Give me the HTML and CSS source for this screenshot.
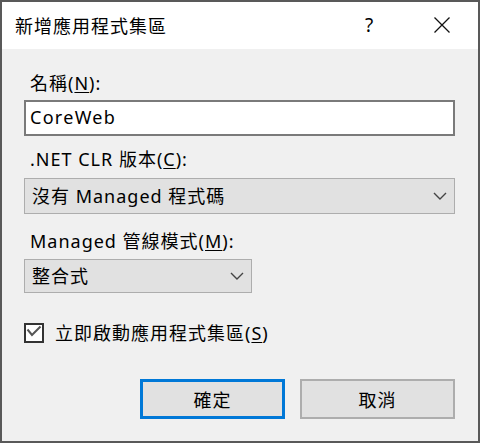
FILE: index.html
```html
<!DOCTYPE html>
<html lang="zh-Hant">
<head>
<meta charset="utf-8">
<link rel="stylesheet" href="styles.css">
</head>
<body>
<div class="window">
  <div class="titlebar">
    <div class="title">新增應用程式集區</div>
    <div class="help">?</div>
    <div class="close">
      <svg width="16" height="16" viewBox="0 0 16 16"><path d="M0.5 0.5 L15.5 15.5 M15.5 0.5 L0.5 15.5" stroke="#111" stroke-width="1.3" fill="none"/></svg>
    </div>
  </div>
  <div class="content">
    <div class="label l-name">名稱(<u>N</u>):</div>
    <div class="textbox">CoreWeb</div>
    <div class="label l-clr">.NET CLR 版本(<u>C</u>):</div>
    <div class="select wide">
      <span>沒有 Managed 程式碼</span>
      <svg class="chev" width="14" height="8" viewBox="0 0 14 8"><path d="M1 1 L7 7 L13 1" stroke="#444" stroke-width="1.4" fill="none"/></svg>
    </div>
    <div class="label l-mode">Managed 管線模式(<u>M</u>):</div>
    <div class="select narrow">
      <span>整合式</span>
      <svg class="chev" width="14" height="8" viewBox="0 0 14 8"><path d="M1 1 L7 7 L13 1" stroke="#444" stroke-width="1.4" fill="none"/></svg>
    </div>
    <div class="check-row">
      <div class="checkbox">
        <svg width="16" height="16" viewBox="0 0 16 16"><path d="M1.5 4.5 L6 10 L14.5 1.5" stroke="#555" stroke-width="2" fill="none"/></svg>
      </div>
      <div class="check-label">立即啟動應用程式集區(<u>S</u>)</div>
    </div>
    <div class="buttons">
      <div class="btn ok">確定</div>
      <div class="btn cancel">取消</div>
    </div>
  </div>
</div>
</body>
</html>
```
FILE: styles.css
```css
html, body {
  margin: 0;
  padding: 0;
}
body {
  font-family: "Noto Sans", "Noto Sans CJK TC", sans-serif;
  font-size: 18px;
  letter-spacing: 1px;
  color: #000;
}
.window {
  width: 480px;
  height: 443px;
  box-sizing: border-box;
  border: 2px solid #595959;
  background: #f0f0f0;
  display: flex;
  flex-direction: column;
}
.titlebar {
  height: 47px;
  background: #fff;
  display: flex;
  align-items: center;
  flex: none;
}
.title {
  margin-left: 13px;
  flex: 1;
  font-family: "Noto Sans CJK TC", sans-serif;
  font-size: 18px;
  line-height: 24px;
  margin-top: -2px;
}
.help {
  width: 12px;
  margin-right: 57px;
  font-family: "Noto Sans", sans-serif;
  font-size: 19px;
  font-weight: 400;
  line-height: 24px;
  margin-top: -2px;
}
.close {
  width: 16px;
  height: 16px;
  margin-right: 28px;
  margin-top: -2px;
  display: flex;
}
.content {
  padding: 0 23px 0 22px;
  display: flex;
  flex-direction: column;
}
.label {
  line-height: 24px;
  height: 24px;
  padding-left: 6px;
}
.label u, .check-label u {
  text-decoration-thickness: 1px;
  text-underline-offset: 2px;
}
.l-name { margin-top: 22px; }
.l-clr { margin-top: 11px; }
.l-mode { margin-top: 15px; }
.textbox {
  margin-top: 5px;
  height: 36px;
  box-sizing: border-box;
  border: 2px solid #7a7a7a;
  background: #fff;
  padding-left: 4px;
  line-height: 31px;
  letter-spacing: 1.3px;
}
.select {
  box-sizing: border-box;
  border: 1px solid #adadad;
  background: #e1e1e1;
  display: flex;
  align-items: center;
  justify-content: space-between;
  padding: 0 7px 0 7px;
}
.select span {
  line-height: 24px;
}
.wide {
  margin-top: 7px;
  height: 36px;
}
.narrow {
  margin-top: 6px;
  height: 34px;
  width: 228px;
}
.chev {
  flex: none;
}
.check-row {
  margin-top: 30px;
  display: flex;
  align-items: center;
  height: 20px;
}
.checkbox {
  width: 20px;
  height: 20px;
  box-sizing: border-box;
  border: 2px solid #333;
  background: #fff;
  display: flex;
  align-items: center;
  justify-content: center;
}
.check-label {
  margin-left: 11px;
  line-height: 24px;
}
.buttons {
  margin-top: 36px;
  display: flex;
  padding-left: 116px;
  gap: 15px;
}
.btn {
  height: 40px;
  box-sizing: border-box;
  background: #e1e1e1;
  display: flex;
  align-items: center;
  justify-content: center;
  font-family: "Noto Sans CJK TC", sans-serif;
}
.ok {
  width: 145px;
  border: 3px solid #0078d7;
}
.cancel {
  width: 155px;
  border: 2px solid #adadad;
}
```
